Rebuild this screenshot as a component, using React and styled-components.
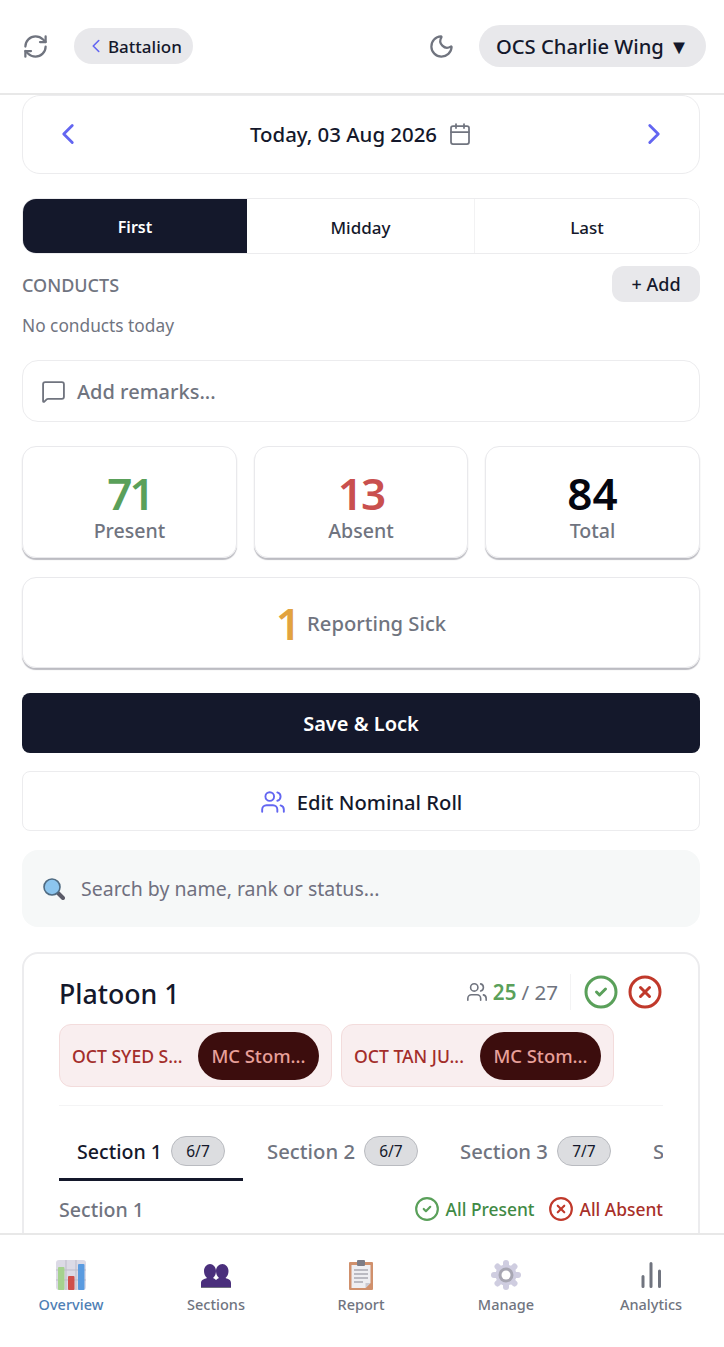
import React from "react";
import styled, { createGlobalStyle } from "styled-components";
import {
  RefreshCw,
  ChevronLeft,
  ChevronRight,
  Moon,
  Calendar,
  MessageSquare,
  Users,
  CircleCheck,
  CircleX,
} from "lucide-react";

const GlobalStyle = createGlobalStyle`
  html, body {
    margin: 0;
    padding: 0;
    background: #fff;
  }
  * {
    box-sizing: border-box;
  }
  body {
    font-family: "Noto Sans", "Open Sans", sans-serif;
    color: #14182b;
  }
`;

const Page = styled.div`
  width: 724px;
  height: 1347px;
  display: flex;
  flex-direction: column;
  overflow: hidden;
  background: #fff;
`;

const Header = styled.header`
  flex: none;
  height: 95px;
  padding: 0 18px 1px 22px;
  display: flex;
  align-items: center;
  border-bottom: 2px solid #e8e8e8;
`;

const IconSlot = styled.span`
  display: flex;
  color: ${(p) => p.color || "#70747f"};
`;

const BackPill = styled.div`
  margin-left: 25px;
  height: 36px;
  width: 119px;
  padding-left: 11px;
  display: flex;
  align-items: center;
  gap: 1px;
  border-radius: 18px;
  background: #e8e8eb;
  font-size: 17px;
  font-weight: 500;
`;

const Spacer = styled.div`
  flex: 1;
`;

const WingPill = styled.div`
  margin-left: 24px;
  height: 42px;
  width: 227px;
  display: flex;
  align-items: center;
  justify-content: center;
  border-radius: 21px;
  background: #e8e8eb;
  font-size: 20.2px;
  font-weight: 500;
  white-space: nowrap;
`;

const Main = styled.main`
  flex: 1;
  min-height: 0;
  overflow: hidden;
  padding: 0 24px 0 22px;
`;

const DateCard = styled.div`
  height: 79px;
  padding: 0 28px 2px;
  display: flex;
  align-items: center;
  justify-content: space-between;
  border: 1px solid #ececee;
  border-radius: 18px;
`;

const DateLabel = styled.div`
  display: flex;
  align-items: center;
  gap: 11px;
  font-size: 20.4px;
  font-weight: 500;
`;

const Segments = styled.div`
  margin-top: 24px;
  height: 56px;
  display: grid;
  grid-template-columns: 224px 227px 1fr;
  border: 1px solid #ececee;
  border-radius: 14px;
  overflow: hidden;
`;

const Segment = styled.div`
  padding-top: 2px;
  display: flex;
  align-items: center;
  justify-content: center;
  font-size: ${(p) => (p.$active ? "16px" : "17px")};
  font-weight: ${(p) => (p.$active ? 600 : 500)};
  background: ${(p) => (p.$active ? "#14182b" : "#fff")};
  color: ${(p) => (p.$active ? "#fff" : "#14182b")};
  border-left: ${(p) => (p.$divided ? "1px solid #f2f2f3" : "none")};
`;

const ConductsRow = styled.div`
  margin-top: 12px;
  height: 36px;
  display: flex;
  align-items: center;
  justify-content: space-between;
`;

const SectionHeading = styled.div`
  padding-top: 2px;
  font-size: 18px;
  font-weight: 500;
  color: #70747f;
`;

const AddButton = styled.div`
  width: 88px;
  height: 36px;
  display: flex;
  align-items: center;
  justify-content: center;
  border-radius: 12px;
  background: #e8e8eb;
  font-size: 18px;
  font-weight: 500;
`;

const EmptyNote = styled.div`
  margin-top: 12px;
  font-size: 17.3px;
  line-height: 24px;
  color: #70747f;
`;

const RemarksBox = styled.div`
  margin-top: 22px;
  height: 62px;
  padding-left: 18px;
  display: flex;
  align-items: center;
  gap: 11px;
  border: 1px solid #ececee;
  border-radius: 16px;
  font-size: 20px;
  font-weight: 500;
  color: #70747f;
`;

const StatGrid = styled.div`
  margin-top: 24px;
  display: grid;
  grid-template-columns: 215px 214px 215px;
  gap: 17px;
`;

const StatCard = styled.div`
  height: 112px;
  padding-top: 21px;
  display: flex;
  flex-direction: column;
  align-items: center;
  border: 1px solid #e9e9ec;
  border-radius: 14px;
  box-shadow: 0 2px 1px #bcbcc2;
`;

const StatValue = styled.div`
  font-size: 44px;
  line-height: 50px;
  font-weight: 600;
  letter-spacing: ${(p) => p.$tight || "0"};
  color: ${(p) => p.color};
`;

const StatLabel = styled.div`
  font-size: ${(p) => p.$size || "19.6px"};
  line-height: 26px;
  font-weight: 500;
  color: #70747f;
`;

const SickCard = styled.div`
  margin-top: 19px;
  height: 91px;
  display: flex;
  align-items: center;
  justify-content: center;
  gap: 6px;
  border: 1px solid #e9e9ec;
  border-radius: 14px;
  box-shadow: 0 2px 1px #bcbcc2;
`;

const SaveButton = styled.div`
  margin-top: 25px;
  height: 60px;
  display: flex;
  align-items: center;
  justify-content: center;
  border-radius: 8px;
  background: #14182b;
  color: #fff;
  font-size: 20px;
  font-weight: 600;
`;

const EditButton = styled.div`
  margin-top: 18px;
  height: 60px;
  padding-top: 2px;
  display: flex;
  align-items: center;
  justify-content: center;
  gap: 11px;
  border: 1px solid #ececee;
  border-radius: 8px;
  font-size: 20.2px;
  font-weight: 500;
`;

const SearchBox = styled.div`
  margin-top: 19px;
  height: 77px;
  padding-left: 21px;
  display: flex;
  align-items: center;
  gap: 16px;
  border-radius: 16px;
  background: #f6f8f8;
  font-size: 19.5px;
  color: #70707f;
`;

const PlatoonCard = styled.section`
  margin-top: 25px;
  height: 400px;
  padding: 8px 35px 0;
  border: 2px solid #ececee;
  border-radius: 16px;
`;

const PlatoonTop = styled.div`
  height: 62px;
  display: flex;
  align-items: center;
  justify-content: space-between;
`;

const PlatoonTitle = styled.h2`
  margin: 0;
  font-size: 26.7px;
  font-weight: 500;
`;

const PlatoonTools = styled.div`
  display: flex;
  align-items: center;
  gap: 8px;
  margin-top: -2px;
`;

const Count = styled.div`
  display: flex;
  align-items: center;
  gap: 5px;
  padding-right: 12px;
  margin-right: 4px;
  height: 36px;
  border-right: 1px solid #f3f3f4;
  font-size: 20.6px;
  color: #70747f;
`;

const CountValue = styled.b`
  font-weight: 600;
  color: #5aa05a;
`;

const ChipRow = styled.div`
  display: flex;
  gap: 9px;
`;

const Chip = styled.div`
  width: 273px;
  height: 63px;
  padding: 0 12px;
  display: flex;
  align-items: center;
  justify-content: space-between;
  border: 1px solid #f3dcdc;
  border-radius: 12px;
  background: #f9eeef;
  font-size: 17.6px;
  font-weight: 500;
  white-space: nowrap;
  color: #a32d2a;
`;

const ChipStatus = styled.span`
  width: 121px;
  height: 48px;
  display: flex;
  align-items: center;
  justify-content: center;
  border-radius: 24px;
  background: #3c0d0d;
  font-size: 18.4px;
  color: #e8a09a;
`;

const Divider = styled.div`
  margin-top: 18px;
  border-top: 1px solid #f4f4f5;
`;

const Tabs = styled.div`
  margin-top: 18px;
  height: 57px;
  display: flex;
  gap: 6px;
  overflow: hidden;
`;

const Tab = styled.div`
  flex: none;
  padding: 0 18px;
  display: flex;
  align-items: center;
  gap: 9px;
  font-size: ${(p) => (p.$active ? "19.6px" : "20.3px")};
  font-weight: 500;
  white-space: nowrap;
  color: ${(p) => (p.$active ? "#14182b" : "#70747f")};
  border-bottom: 3px solid ${(p) => (p.$active ? "#14182b" : "transparent")};
`;

const TabBadge = styled.span`
  width: 54px;
  height: 30px;
  display: flex;
  align-items: center;
  justify-content: center;
  border: 1px solid #b9bbc0;
  border-radius: 15px;
  background: #dcdde0;
  font-size: 15.5px;
  font-weight: 400;
  color: #14182b;
`;

const SectionRow = styled.div`
  margin-top: 15px;
  display: flex;
  align-items: center;
  justify-content: space-between;
`;

const SectionName = styled.div`
  font-size: 19.6px;
  font-weight: 500;
  color: #70747f;
`;

const BulkActions = styled.div`
  display: flex;
  align-items: center;
  gap: 13px;
  margin-top: -2px;
`;

const BulkAction = styled.div`
  display: flex;
  align-items: center;
  gap: 6px;
  font-size: 17.4px;
  font-weight: 500;
  color: ${(p) => p.color};
`;

const BottomNav = styled.nav`
  flex: none;
  height: 114px;
  padding: 24px 2px 0 0;
  display: grid;
  grid-template-columns: repeat(5, 145px);
  justify-content: center;
  align-content: start;
  border-top: 2px solid #e8e8e8;
  background: #fff;
`;

const NavItem = styled.div`
  display: flex;
  flex-direction: column;
  align-items: center;
  gap: 3px;
  font-size: 14.5px;
  font-weight: 500;
  color: ${(p) => (p.$active ? "#4f7fb5" : "#70747f")};
`;

const NavIconBox = styled.div`
  width: 32px;
  height: 32px;
  display: flex;
  align-items: center;
  justify-content: center;
`;

const ChartEmoji = () => (
  <svg width="30" height="30" viewBox="0 0 30 30">
    <rect width="30" height="30" rx="3" fill="#dcdae6" />
    <path d="M10 0v30M20 0v30M0 10h30M0 20h30" stroke="#bdbbc9" strokeWidth="1" />
    <rect x="2" y="7" width="6.5" height="23" rx="1" fill="#a5d28e" />
    <rect x="12" y="16" width="6.5" height="14" rx="1" fill="#cf4f4b" />
    <rect x="22" y="4" width="6.5" height="26" rx="1" fill="#5a9be0" />
  </svg>
);

const BustsEmoji = () => (
  <svg width="30" height="25" viewBox="0 0 30 25">
    <rect x="0" y="23" width="30" height="2" fill="#70707f" />
    <path
      d="M0 24v-4c0-3 3-4 6-5-2-2-3-4-3-7 0-4 3-7 6-7s6 3 6 7c0 3-1 5-3 7 3 1 4 3 4 5v4z"
      fill="#4a2f7c"
    />
    <path
      d="M14 24v-4c0-2 1-4 4-5-2-2-3-4-3-7 0-4 3-7 6.500-7 3 0 6 3 6 7 0 3-1 5-3 7 3 1 5.500 2 5.500 5v4z"
      fill="#4a2f7c"
    />
  </svg>
);

const ClipboardEmoji = () => (
  <svg width="24" height="30" viewBox="0 0 24 30">
    <rect x="0" y="2" width="24" height="28" rx="1" fill="#d0906c" />
    <path d="M2.500 5h19v18l-5 5h-14z" fill="#eeeef2" />
    <path d="M16.500 28l5-5h-5z" fill="#c9c9d2" />
    <rect x="8" y="0" width="8" height="6" rx="1" fill="#7c7c86" />
    <path d="M5 10h14M5 14h14M5 18h14M5 22h9" stroke="#a9a9b3" strokeWidth="1.6" />
  </svg>
);

const GearEmoji = () => (
  <svg width="30" height="30" viewBox="0 0 30 30">
    <g fill="#cfcde0">
      {[0, 45, 90, 135, 180, 225, 270, 315].map((deg) => (
        <rect key={deg} x="12" y="0" width="6" height="9" rx="3" transform={`rotate(${deg} 15 15)`} />
      ))}
    </g>
    <circle cx="15" cy="15" r="10.5" fill="#cfcde0" />
    <circle cx="15" cy="15" r="7.5" fill="#a7a6b2" />
    <circle cx="15" cy="15" r="4.5" fill="#fff" />
  </svg>
);

const BarsIcon = () => (
  <svg width="30" height="30" viewBox="0 0 30 30" fill="none" stroke="#70747f" strokeWidth="3" strokeLinecap="round">
    <path d="M7 26.500V16.500M15 26.500V3.500M23.500 26.500V11" />
  </svg>
);

const SearchEmoji = () => (
  <svg width="22" height="22" viewBox="0 0 22 22">
    <path d="M14 14l6 6" stroke="#5b5b68" strokeWidth="4" strokeLinecap="round" />
    <circle cx="9" cy="9" r="8" fill="#8cc5ee" stroke="#4f6b82" strokeWidth="1.6" />
  </svg>
);

const absentees = [
  { name: "OCT SYED S...", status: "MC Stom..." },
  { name: "OCT TAN JU...", status: "MC Stom..." },
];

const sections = [
  { name: "Section 1", count: "6/7", active: true },
  { name: "Section 2", count: "6/7" },
  { name: "Section 3", count: "7/7" },
  { name: "Section 4", count: "6/6" },
];

const navItems = [
  { label: "Overview", icon: <ChartEmoji />, active: true },
  { label: "Sections", icon: <BustsEmoji /> },
  { label: "Report", icon: <ClipboardEmoji /> },
  { label: "Manage", icon: <GearEmoji /> },
  { label: "Analytics", icon: <BarsIcon /> },
];

export default function App() {
  return (
    <>
      <GlobalStyle />
      <Page>
        <Header>
          <IconSlot>
            <RefreshCw size={27} strokeWidth={2} />
          </IconSlot>
          <BackPill>
            <ChevronLeft size={22} color="#6366f1" strokeWidth={1.75} />
            Battalion
          </BackPill>
          <Spacer />
          <IconSlot>
            <Moon size={27} strokeWidth={2} />
          </IconSlot>
          <WingPill>OCS Charlie Wing ▼</WingPill>
        </Header>

        <Main>
          <DateCard>
            <ChevronLeft size={34} color="#6366f1" strokeWidth={2} />
            <DateLabel>
              Today, 03 Aug 2026
              <Calendar size={24} color="#70747f" strokeWidth={1.75} />
            </DateLabel>
            <ChevronRight size={34} color="#6366f1" strokeWidth={2} />
          </DateCard>

          <Segments>
            <Segment $active>First</Segment>
            <Segment>Midday</Segment>
            <Segment $divided>Last</Segment>
          </Segments>

          <ConductsRow>
            <SectionHeading>CONDUCTS</SectionHeading>
            <AddButton>+ Add</AddButton>
          </ConductsRow>
          <EmptyNote>No conducts today</EmptyNote>

          <RemarksBox>
            <MessageSquare size={25} color="#70747f" strokeWidth={1.75} />
            Add remarks...
          </RemarksBox>

          <StatGrid>
            <StatCard>
              <StatValue color="#5aa05a" $tight="-3px">71</StatValue>
              <StatLabel>Present</StatLabel>
            </StatCard>
            <StatCard>
              <StatValue color="#c9504e" $tight="-2px">13</StatValue>
              <StatLabel>Absent</StatLabel>
            </StatCard>
            <StatCard>
              <StatValue color="#05060f">84</StatValue>
              <StatLabel>Total</StatLabel>
            </StatCard>
          </StatGrid>

          <SickCard>
            <StatValue color="#e2a33f">1</StatValue>
            <StatLabel $size="20.2px">Reporting Sick</StatLabel>
          </SickCard>

          <SaveButton>Save &amp; Lock</SaveButton>
          <EditButton>
            <Users size={26} color="#6366f1" strokeWidth={1.75} />
            Edit Nominal Roll
          </EditButton>

          <SearchBox>
            <SearchEmoji />
            Search by name, rank or status...
          </SearchBox>

          <PlatoonCard>
            <PlatoonTop>
              <PlatoonTitle>Platoon 1</PlatoonTitle>
              <PlatoonTools>
                <Count>
                  <Users size={22} color="#70747f" strokeWidth={1.75} />
                  <CountValue>25</CountValue> / 27
                </Count>
                <CircleCheck size={36} color="#5aa05a" strokeWidth={2} />
                <CircleX size={36} color="#c0392b" strokeWidth={2} />
              </PlatoonTools>
            </PlatoonTop>

            <ChipRow>
              {absentees.map((a) => (
                <Chip key={a.name}>
                  {a.name}
                  <ChipStatus>{a.status}</ChipStatus>
                </Chip>
              ))}
            </ChipRow>

            <Divider />

            <Tabs>
              {sections.map((s) => (
                <Tab key={s.name} $active={s.active}>
                  {s.name}
                  <TabBadge>{s.count}</TabBadge>
                </Tab>
              ))}
            </Tabs>

            <SectionRow>
              <SectionName>Section 1</SectionName>
              <BulkActions>
                <BulkAction color="#3f8a45">
                  <CircleCheck size={26} color="#5aa05a" strokeWidth={2} />
                  All Present
                </BulkAction>
                <BulkAction color="#a82f28">
                  <CircleX size={26} color="#c0392b" strokeWidth={2} />
                  All Absent
                </BulkAction>
              </BulkActions>
            </SectionRow>
          </PlatoonCard>
        </Main>

        <BottomNav>
          {navItems.map((n) => (
            <NavItem key={n.label} $active={n.active}>
              <NavIconBox>{n.icon}</NavIconBox>
              {n.label}
            </NavItem>
          ))}
        </BottomNav>
      </Page>
    </>
  );
}
